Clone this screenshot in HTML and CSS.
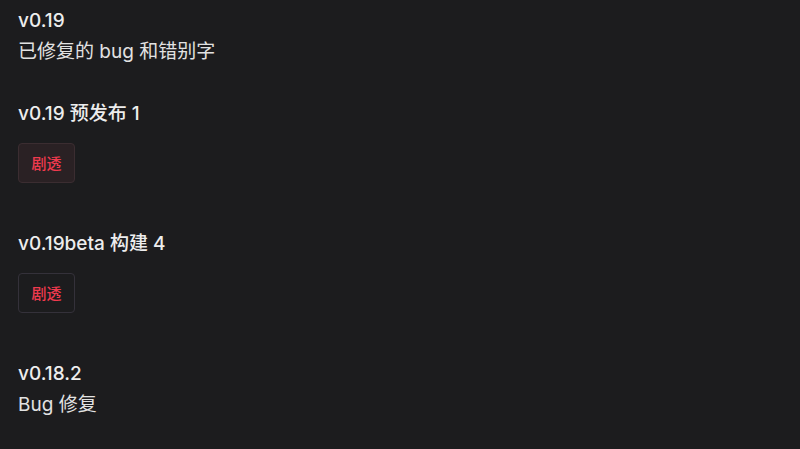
FILE: index.html
```html
<!DOCTYPE html>
<html lang="zh">
<head>
<meta charset="utf-8">
<link rel="stylesheet" href="styles.css">
</head>
<body>
<main class="log">
  <section class="entry">
    <h2 class="ver">v0.19</h2>
    <p class="note">已修复的 bug 和错别字</p>
  </section>
  <section class="entry">
    <h2 class="ver">v0.19 预发布 1</h2>
    <div class="spoiler spoiler-active">剧透</div>
  </section>
  <section class="entry">
    <h2 class="ver">v0.19beta 构建 4</h2>
    <div class="spoiler">剧透</div>
  </section>
  <section class="entry">
    <h2 class="ver">v0.18.2</h2>
    <p class="note">Bug 修复</p>
  </section>
</main>
</body>
</html>
```
FILE: styles.css
```css
html, body {
  margin: 0;
  padding: 0;
  background: #1c1c1e;
  height: 100%;
}
body {
  font-family: "Inter", "Noto Sans CJK SC", sans-serif;
  color: #e6e6e6;
}
.log {
  display: flex;
  flex-direction: column;
  padding: 6px 18px 0 18px;
  gap: 32px;
}
.entry {
  display: flex;
  flex-direction: column;
  align-items: flex-start;
}
.ver {
  margin: 0;
  font-size: 19px;
  font-weight: 500;
  line-height: 30px;
  color: #ededed;
}
.note {
  margin: 0;
  font-size: 19px;
  font-weight: 400;
  line-height: 31px;
  color: #e2e2e2;
}
.spoiler {
  margin-top: 14px;
  margin-bottom: 14px;
  box-sizing: border-box;
  width: 57px;
  height: 40px;
  padding-bottom: 2px;
  display: flex;
  align-items: center;
  justify-content: center;
  font-size: 15px;
  font-weight: 500;
  color: #f03a4e;
  border: 1px solid #34313a;
  border-radius: 4px;
}
.spoiler-active {
  background: #2a2124;
  border-color: #3b2d31;
}
```
